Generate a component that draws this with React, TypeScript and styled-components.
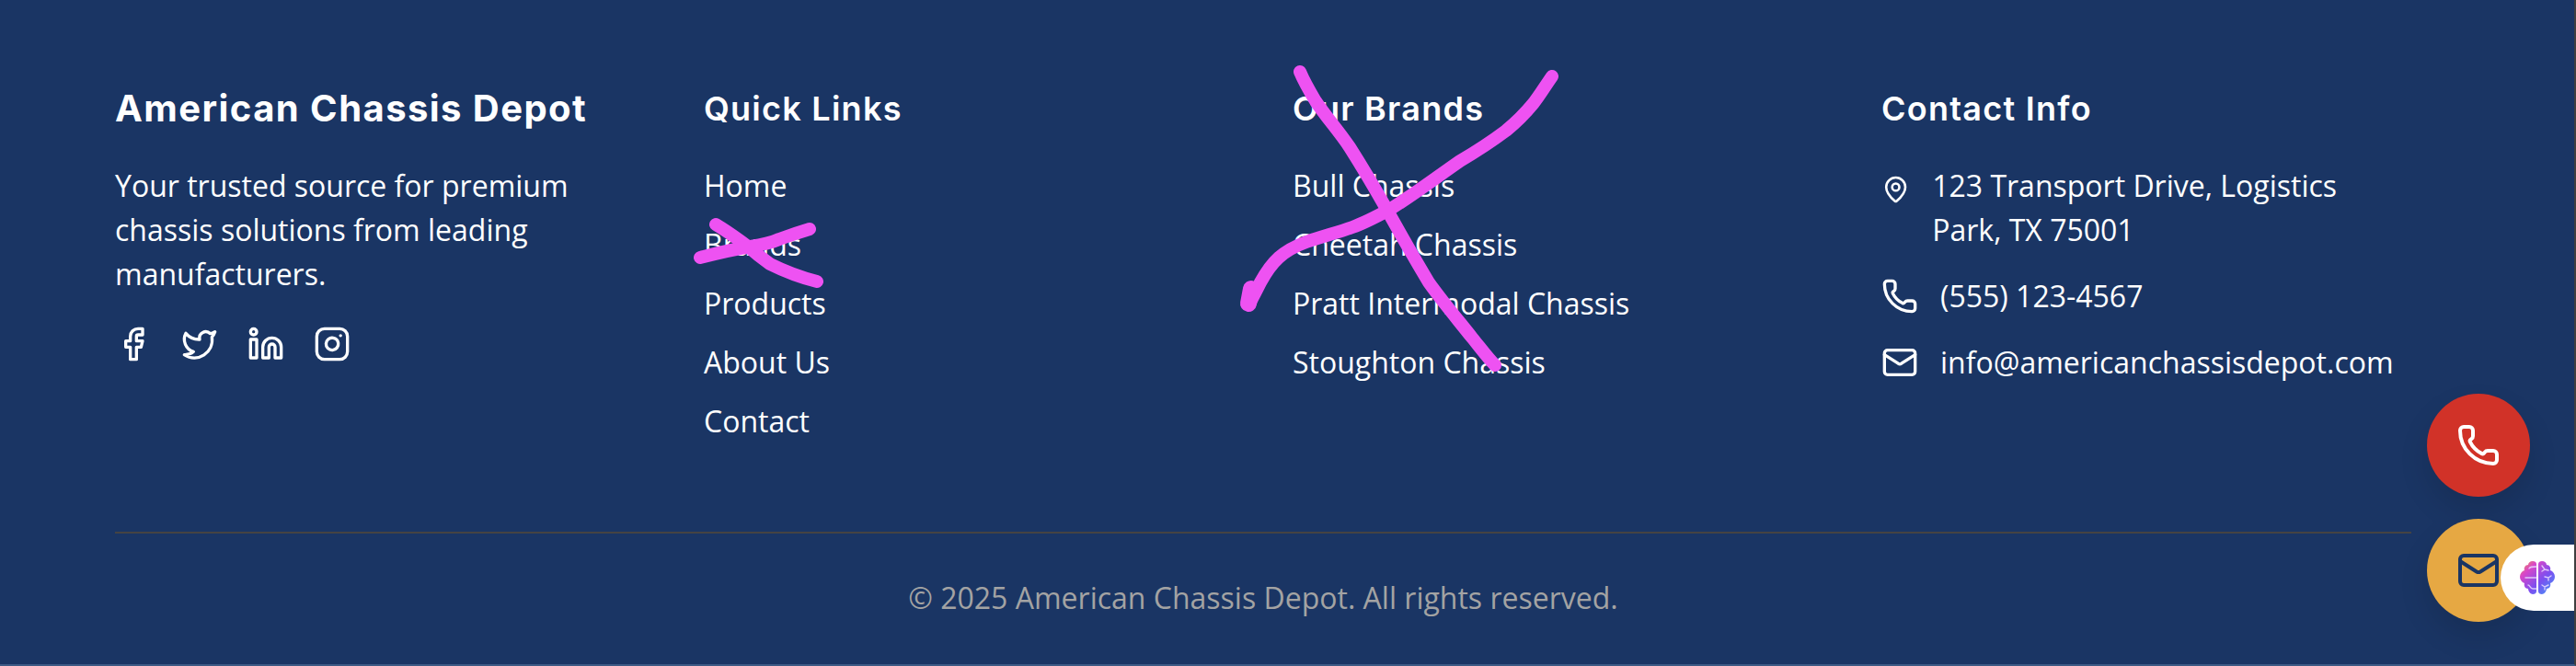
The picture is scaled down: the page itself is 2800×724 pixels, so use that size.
import React from "react";
import styled, { createGlobalStyle } from "styled-components";
import { Facebook, Twitter, Linkedin, Instagram, MapPin, Phone, Mail } from "lucide-react";

const GlobalStyle = createGlobalStyle`
  html, body {
    margin: 0;
    padding: 0;
    background: #1a3564;
  }
  * {
    box-sizing: border-box;
  }
`;

const quickLinks = ["Home", "Brands", "Products", "About Us", "Contact"];
const brands = ["Bull Chassis", "Cheetah Chassis", "Pratt Intermodal Chassis", "Stoughton Chassis"];

const App: React.FC = () => {
  return (
    <>
      <GlobalStyle />
      <Footer>
        <Grid>
          <Column>
            <Title $brand>American Chassis Depot</Title>
            <Description>Your trusted source for premium chassis solutions from leading manufacturers.</Description>
            <Socials>
              <Facebook size={40} />
              <Twitter size={40} />
              <Linkedin size={40} />
              <Instagram size={40} />
            </Socials>
          </Column>
          <Column>
            <Title>Quick Links</Title>
            <LinkList>
              {quickLinks.map((item) => (
                <li key={item}>{item}</li>
              ))}
            </LinkList>
          </Column>
          <Column>
            <Title>Our Brands</Title>
            <LinkList>
              {brands.map((item) => (
                <li key={item}>{item}</li>
              ))}
            </LinkList>
          </Column>
          <Column>
            <Title>Contact Info</Title>
            <ContactList>
              <ContactRow $top>
                <MapPin size={40} />
                <span>123 Transport Drive, Logistics Park, TX 75001</span>
              </ContactRow>
              <ContactRow>
                <Phone size={40} />
                <span>(555) 123-4567</span>
              </ContactRow>
              <ContactRow>
                <Mail size={40} />
                <span>info@americanchassisdepot.com</span>
              </ContactRow>
            </ContactList>
          </Column>
        </Grid>
        <Copyright>© 2025 American Chassis Depot. All rights reserved.</Copyright>
      </Footer>

      <FloatStack>
        <FloatButton $bg="#d13228" $fg="#ffffff">
          <Phone size={48} />
        </FloatButton>
        <FloatButton $bg="#e6a843" $fg="#1a3564">
          <Mail size={48} />
        </FloatButton>
      </FloatStack>

      <BrainTab>
        <svg width="38" height="36" viewBox="0 0 38 36" fill="none">
          <defs>
            <linearGradient id="brainFill" x1="0" y1="0" x2="1" y2="1">
              <stop offset="0" stopColor="#f0a03c" />
              <stop offset="0.25" stopColor="#d946c8" />
              <stop offset="0.6" stopColor="#7c4ff0" />
              <stop offset="1" stopColor="#3f9cf8" />
            </linearGradient>
          </defs>
          <path
            fill="url(#brainFill)"
            d="M18 3c0-2-2-3-4-3-3 0-5 2-5 4-3 0-5 3-4 6-3 1-5 4-5 7 0 3 2 6 5 7-1 3 1 6 4 6 0 3 3 6 5 6 2 0 4-1 4-3zM20 3c0-2 2-3 4-3 3 0 5 2 5 4 3 0 5 3 4 6 3 1 5 4 5 7 0 3-2 6-5 7 1 3-1 6-4 6 0 3-3 6-5 6-2 0-4-1-4-3z"
          />
          <CircuitLines>
            <path d="M6 18h12M10 8c1-2 3-2 8-2M9 26c2 0 2 4 5 4h4" />
            <path d="M24 5l3 4-3 2M27 9l4 1M27 17l4 1 3-2M31 18v3M24 26l3 2 4-2M27 28v3" />
          </CircuitLines>
        </svg>
      </BrainTab>

      <Scribbles width="2800" height="724" viewBox="0 0 2800 724" fill="none">
        <path d="M778 244C793 253 805 262 813 268C822 276 830 282 837 287C855 296 872 302 888 306" />
        <path d="M761 280C780 275 798 271 816 268C828 266 838 264 847 260C858 256 870 252 880 249" />
        <path d="M1413 78C1418 90 1424 100 1430 110C1442 128 1455 142 1467 160C1481 182 1494 204 1507 227C1522 254 1538 282 1553 307C1568 328 1585 348 1600 367C1609 378 1617 389 1625 397" />
        <path d="M1687 83C1680 93 1674 103 1667 112C1658 123 1648 133 1637 142C1621 154 1604 165 1587 175C1561 193 1536 212 1510 228C1497 235 1484 242 1470 247C1453 253 1437 257 1420 263C1409 267 1399 272 1390 280C1381 288 1375 298 1370 307C1366 315 1362 323 1358 330" />
        <BlobPath d="M1360 314L1357 330" />
      </Scribbles>
    </>
  );
};

const Footer = styled.footer`
  background: #1a3564;
  color: #ffffff;
  padding: 90px 177px 48px 125px;
  border-right: 2px solid #3f3f3f;
  border-bottom: 2px solid #3d5a85;
  font-family: "Open Sans", sans-serif;
  font-size: 32px;
  line-height: 48px;
`;

const Grid = styled.div`
  display: grid;
  grid-template-columns: repeat(4, 1fr);
  gap: 64px;
  padding-bottom: 96px;
  border-bottom: 2px solid #454343;
`;

const Column = styled.div`
  min-width: 0;
`;

const Title = styled.h3<{ $brand?: boolean }>`
  margin: 0 0 32px;
  font-family: Inter, sans-serif;
  font-size: ${(props) => (props.$brand ? "40px" : "36px")};
  font-weight: ${(props) => (props.$brand ? 700 : 600)};
  letter-spacing: ${(props) => (props.$brand ? "1.44px" : "1.25px")};
  line-height: 56px;
  color: #ffffff;
`;

const Description = styled.p`
  margin: 0 0 32px;
`;

const Socials = styled.div`
  display: flex;
  gap: 32px;
`;

const LinkList = styled.ul`
  display: flex;
  flex-direction: column;
  gap: 16px;
  margin: 0;
  padding: 0;
  list-style: none;
`;

const ContactList = styled.div`
  display: flex;
  flex-direction: column;
  gap: 24px;
`;

const ContactRow = styled.div<{ $top?: boolean }>`
  display: flex;
  align-items: ${(props) => (props.$top ? "flex-start" : "center")};
  gap: 24px;

  svg {
    margin-top: ${(props) => (props.$top ? "8px" : "0")};
  }
`;

const Copyright = styled.p`
  margin: 46px 0 0;
  text-align: center;
  color: #a3a3a3;
`;

const FloatStack = styled.div`
  position: fixed;
  right: 50px;
  bottom: 48px;
  display: flex;
  flex-direction: column;
  gap: 24px;
`;

const FloatButton = styled.div<{ $bg: string; $fg: string }>`
  display: flex;
  align-items: center;
  justify-content: center;
  width: 112px;
  height: 112px;
  border-radius: 50%;
  background: ${(props) => props.$bg};
  color: ${(props) => props.$fg};
  box-shadow: 0 16px 32px rgba(0, 0, 0, 0.12);
`;

const BrainTab = styled.div`
  position: fixed;
  top: 592px;
  right: 2px;
  display: flex;
  align-items: center;
  justify-content: flex-end;
  width: 80px;
  height: 72px;
  padding-right: 21px;
  background: #ffffff;
  border-radius: 36px 0 0 36px;
`;

const CircuitLines = styled.g`
  stroke: #ecdcff;
  stroke-width: 1.4;
  stroke-linecap: round;
  fill: none;
  opacity: 0.85;
`;

const Scribbles = styled.svg`
  position: absolute;
  top: 0;
  left: 0;
  pointer-events: none;

  path {
    stroke: #ee52f2;
    stroke-width: 14;
    stroke-linecap: round;
    stroke-linejoin: round;
  }
`;

const BlobPath = styled.path`
  && {
    stroke-width: 18;
  }
`;

export default App;
